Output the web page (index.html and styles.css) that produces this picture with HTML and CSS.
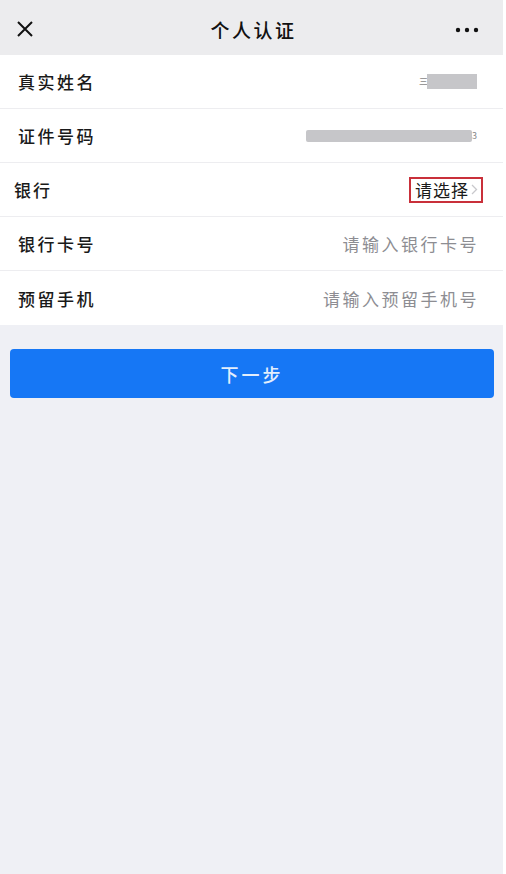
FILE: index.html
```html
<!DOCTYPE html>
<html lang="zh-CN">
<head>
<meta charset="utf-8">
<title>个人认证</title>
<link rel="stylesheet" href="styles.css">
</head>
<body>
<div class="screen">
  <header class="nav">
    <svg class="nav-close" width="18" height="18" viewBox="0 0 18 18"><path d="M2 2 L16 16 M16 2 L2 16" stroke="#111" stroke-width="2" fill="none"/></svg>
    <div class="nav-title">个人认证</div>
    <svg class="nav-more" width="24" height="6" viewBox="0 0 24 6"><circle cx="3" cy="3" r="2.2" fill="#111"/><circle cx="12" cy="3" r="2.2" fill="#111"/><circle cx="21" cy="3" r="2.2" fill="#111"/></svg>
  </header>
  <section class="form">
    <div class="row">
      <span class="label">真实姓名</span>
      <span class="value"><span class="peek">三</span><span class="mask mask-name"></span></span>
    </div>
    <div class="row">
      <span class="label">证件号码</span>
      <span class="value"><span class="mask mask-id"></span><span class="peek-end">3</span></span>
    </div>
    <div class="row row-bank">
      <span class="label">银行</span>
      <span class="select">请选择<svg class="chev" width="7" height="11" viewBox="0 0 7 11"><path d="M1 1 L5.5 5.5 L1 10" stroke="#c8c8cc" stroke-width="1.3" fill="none"/></svg></span>
    </div>
    <div class="row">
      <span class="label">银行卡号</span>
      <span class="placeholder">请输入银行卡号</span>
    </div>
    <div class="row">
      <span class="label">预留手机</span>
      <span class="placeholder">请输入预留手机号</span>
    </div>
  </section>
  <div class="actions">
    <button class="btn-next">下一步</button>
  </div>
</div>
</body>
</html>
```
FILE: styles.css
```css
html, body {
  margin: 0;
  padding: 0;
  background: #ffffff;
}
body {
  font-family: "Noto Sans CJK SC", "Noto Sans", sans-serif;
  width: 506px;
  height: 874px;
  overflow: hidden;
}
.screen {
  width: 503px;
  height: 874px;
  background: #eff0f5;
  display: flex;
  flex-direction: column;
}
.nav {
  height: 55px;
  background: #ececee;
  display: flex;
  align-items: center;
  justify-content: space-between;
  padding: 3px 24px 0 16px;
  box-sizing: border-box;
  position: relative;
}
.nav-title {
  font-size: 19px;
  letter-spacing: 2.5px;
  color: #111;
  font-weight: 500;
  position: absolute;
  left: 0;
  right: 0;
  text-align: center;
  padding-left: 4px;
  pointer-events: none;
}
.nav-more {
  margin-top: 2px;
}
.form {
  background: #ffffff;
}
.row {
  height: 54px;
  box-sizing: border-box;
  display: flex;
  align-items: center;
  justify-content: space-between;
  padding: 0 26px 0 18px;
  border-bottom: 1px solid #ededf0;
}
.row:last-child {
  border-bottom: none;
}
.label {
  font-size: 17px;
  letter-spacing: 2.5px;
  color: #1a1a1a;
  font-weight: 500;
}
.row-bank {
  padding-left: 14px;
  padding-right: 20px;
}
.row-bank .label {
  letter-spacing: 2px;
}
.value {
  display: flex;
  align-items: center;
}
.peek {
  font-size: 9px;
  color: #888;
  line-height: 15px;
  margin-right: -1px;
}
.peek-end {
  font-size: 9px;
  color: #888;
  line-height: 12px;
}
.mask {
  display: inline-block;
  background: #c6c6c9;
}
.mask-name {
  width: 50px;
  height: 15px;
}
.mask-id {
  width: 166px;
  height: 12px;
  border-radius: 2px;
}
.select {
  display: flex;
  align-items: center;
  gap: 2px;
  font-size: 17px;
  letter-spacing: 1px;
  color: #1a1a1a;
  border: 2px solid #c9303a;
  padding: 0 3px 0 4px;
  height: 22px;
  line-height: 22px;
}
.placeholder {
  font-size: 17px;
  letter-spacing: 2.5px;
  color: #8d8d92;
  margin-right: -2px;
}
.actions {
  padding: 24px 9px 0 10px;
}
.btn-next {
  width: 100%;
  height: 49px;
  border: none;
  border-radius: 4px;
  background: #1677f5;
  color: #e3eefc;
  font-family: inherit;
  font-size: 18px;
  letter-spacing: 3px;
  font-weight: 500;
}
```
